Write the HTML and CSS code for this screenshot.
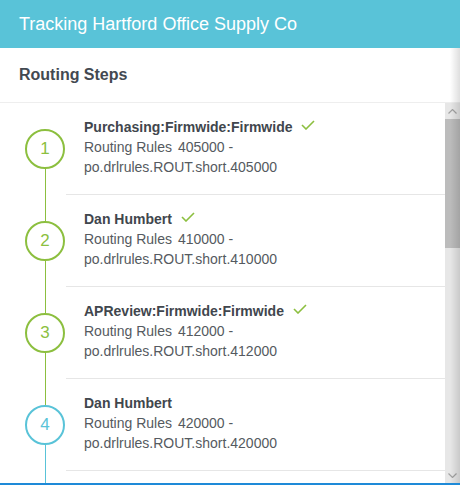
FILE: index.html
```html
<!DOCTYPE html>
<html>
<head>
<meta charset="utf-8">
<link rel="stylesheet" href="styles.css">
</head>
<body>
<div class="app">
  <header class="topbar">Tracking Hartford Office Supply Co</header>
  <section class="panel">
    <h2 class="panel-title">Routing Steps</h2>
    <div class="scroller">
      <ol class="steps">
        <li class="step done first">
          <div class="rail"><span class="circle">1</span></div>
          <div class="content">
            <div class="name">Purchasing:Firmwide:Firmwide <svg class="check" width="14" height="10" viewBox="0 0 14 10"><polyline points="1,5 5,9 13,1"/></svg></div>
            <div class="rule"><span class="label">Routing Rules</span>405000 -</div>
            <div class="rule">po.drlrules.ROUT.short.405000</div>
          </div>
        </li>
        <li class="step done">
          <div class="rail"><span class="circle">2</span></div>
          <div class="content">
            <div class="name">Dan Humbert <svg class="check" width="14" height="10" viewBox="0 0 14 10"><polyline points="1,5 5,9 13,1"/></svg></div>
            <div class="rule"><span class="label">Routing Rules</span>410000 -</div>
            <div class="rule">po.drlrules.ROUT.short.410000</div>
          </div>
        </li>
        <li class="step done">
          <div class="rail"><span class="circle">3</span></div>
          <div class="content">
            <div class="name">APReview:Firmwide:Firmwide <svg class="check" width="14" height="10" viewBox="0 0 14 10"><polyline points="1,5 5,9 13,1"/></svg></div>
            <div class="rule"><span class="label">Routing Rules</span>412000 -</div>
            <div class="rule">po.drlrules.ROUT.short.412000</div>
          </div>
        </li>
        <li class="step current">
          <div class="rail"><span class="circle">4</span></div>
          <div class="content">
            <div class="name">Dan Humbert</div>
            <div class="rule"><span class="label">Routing Rules</span>420000 -</div>
            <div class="rule">po.drlrules.ROUT.short.420000</div>
          </div>
        </li>
        <li class="step tail">
          <div class="rail"></div>
        </li>
      </ol>
    </div>
    <div class="scrollbar">
      <div class="sb-btn"><svg width="9" height="5" viewBox="0 0 9 5"><polyline points="0.5,4.5 4.5,0.5 8.5,4.5"/></svg></div>
      <div class="sb-track"><div class="sb-thumb"></div></div>
      <div class="sb-btn"><svg width="9" height="5" viewBox="0 0 9 5"><polyline points="0.5,0.5 4.5,4.5 8.5,0.5"/></svg></div>
    </div>
  </section>
</div>
</body>
</html>
```
FILE: styles.css
```css
* { box-sizing: border-box; }
html, body { margin: 0; padding: 0; }
body {
  width: 460px;
  height: 485px;
  overflow: hidden;
  font-family: "Liberation Sans", Arial, sans-serif;
  background: #fff;
}
.app {
  display: flex;
  flex-direction: column;
  height: 485px;
}
.topbar {
  height: 48px;
  background: #59c3d8;
  color: #fff;
  font-size: 18px;
  line-height: 48px;
  padding-left: 19px;
}
.panel {
  position: relative;
  display: grid;
  grid-template-columns: 1fr 15px;
  grid-template-rows: 55px 380px;
  border-bottom: 2px solid #1e8ad8;
}
.panel::after {
  content: "";
  position: absolute;
  top: 0; right: 0; bottom: 0;
  width: 10px;
  background: linear-gradient(to right, rgba(0,0,0,0), rgba(0,0,0,0.13));
  pointer-events: none;
}
.panel-title {
  grid-column: 1 / 3;
  margin: 0;
  height: 55px;
  line-height: 54px;
  padding-left: 19px;
  font-size: 16px;
  font-weight: bold;
  color: #434951;
  border-bottom: 1px solid #eeeeee;
}
.scroller {
  overflow: hidden;
  height: 380px;
}
.steps {
  list-style: none;
  margin: 0;
  padding: 0;
}
.step {
  display: flex;
  height: 92px;
}
.rail {
  position: relative;
  width: 66px;
  flex: none;
  display: flex;
  align-items: center;
  padding-left: 25px;
}
.rail::before,
.rail::after {
  content: "";
  position: absolute;
  left: 45px;
  width: 1px;
  height: calc(50% - 20px);
}
.rail::before { top: 0; background: #8cbf3f; }
.rail::after { bottom: 0; background: #8cbf3f; }
.first .rail::before { display: none; }
.current .rail::after { background: #59c3d8; }
.tail .rail::before { height: 100%; background: #59c3d8; }
.tail .rail::after { display: none; }
.circle {
  width: 40px;
  height: 40px;
  border-radius: 50%;
  border: 2px solid #8cbf3f;
  color: #8cbf3f;
  font-size: 17px;
  display: flex;
  align-items: center;
  justify-content: center;
  background: #fff;
}
.current .circle { border-color: #59c3d8; color: #59c3d8; }
.content {
  flex: 1;
  border-bottom: 1px solid #e6e6e6;
  padding: 14px 0 0 18px;
  font-size: 14px;
  line-height: 20px;
  color: #555a60;
}
.name {
  font-weight: bold;
  color: #41464d;
}
.check {
  margin-left: 5px;
  vertical-align: 2px;
}
.check polyline {
  fill: none;
  stroke: #8cbf3f;
  stroke-width: 1.6;
}
.label { margin-right: 6px; }
.scrollbar {
  display: flex;
  flex-direction: column;
  height: 380px;
  background: #e7e7e7;
}
.sb-btn {
  height: 16px;
  flex: none;
  display: flex;
  align-items: center;
  justify-content: center;
}
.sb-btn polyline {
  fill: none;
  stroke: #a3a3a3;
  stroke-width: 1.2;
}
.sb-track {
  flex: 1;
}
.sb-thumb {
  height: 129px;
  background: #bcbcbc;
}
```
